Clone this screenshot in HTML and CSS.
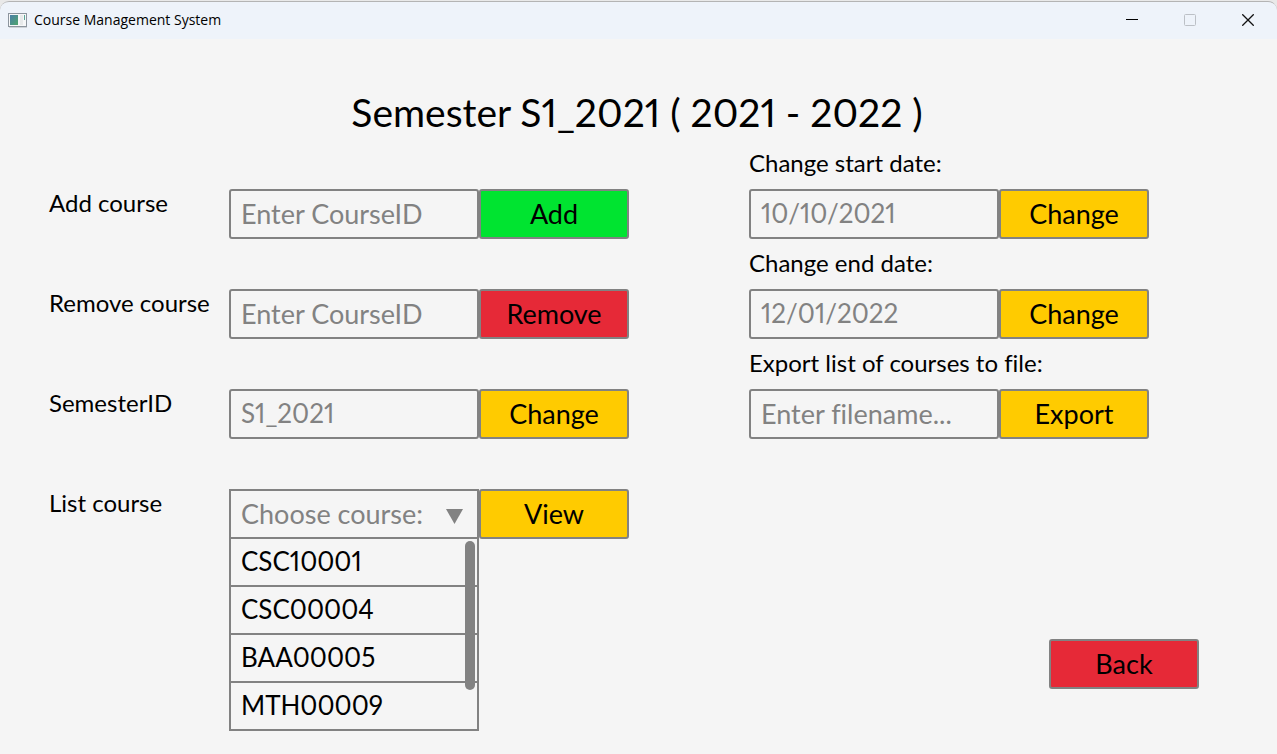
FILE: index.html
```html
<!DOCTYPE html>
<html lang="en">
<head>
<meta charset="utf-8">
<meta name="viewport" content="width=device-width, initial-scale=1">
<title>Course Management System</title>
<link rel="stylesheet" href="styles.css">
</head>
<body>
<div class="window">
  <header class="titlebar">
    <svg class="app-icon" width="20" height="17" viewBox="0 0 20 17" aria-hidden="true">
      <defs>
        <linearGradient id="pane" x1="0" y1="0" x2="1" y2="1">
          <stop offset="0" stop-color="#4a7fa8"/>
          <stop offset="1" stop-color="#4fa56c"/>
        </linearGradient>
      </defs>
      <rect x="1" y="15" width="18" height="1" fill="#cfd3d8"/>
      <rect x=".5" y="1.5" width="18" height="13" fill="#f6f7f8" stroke="#8d959e"/>
      <rect x="2" y="3" width="8" height="10" fill="url(#pane)"/>
      <rect x="12" y="3" width="3" height="10" fill="#e7e9ea"/>
      <rect x="16" y="3" width="1" height="5" fill="#58a596"/>
    </svg>
    <span class="app-name">Course Management System</span>
    <div class="window-controls">
      <button class="window-button" type="button" aria-label="Minimize">
        <svg width="12" height="12" viewBox="0 0 12 12"><path d="M0 5.5H12" stroke="#000"/></svg>
      </button>
      <button class="window-button" type="button" aria-label="Maximize" disabled>
        <svg width="12" height="12" viewBox="0 0 12 12"><rect x=".5" y=".5" width="11" height="11" rx="1" fill="none" stroke="#bcc0c6"/></svg>
      </button>
      <button class="window-button" type="button" aria-label="Close">
        <svg width="12" height="12" viewBox="0 0 12 12"><path d="M.3 .3L11.7 11.7M11.7 .3L.3 11.7" stroke="#111" stroke-width="1.3"/></svg>
      </button>
    </div>
  </header>

  <main class="content">
    <h1 class="heading">Semester S1_2021 ( 2021 - 2022 )</h1>
    <div class="columns">
      <form class="course-form">
        <div class="row">
          <label class="label" for="add-course">Add course</label>
          <div class="field">
            <input class="input" id="add-course" type="text" placeholder="Enter CourseID">
            <button class="button button-add" type="button">Add</button>
          </div>
        </div>
        <div class="row">
          <label class="label" for="remove-course">Remove course</label>
          <div class="field">
            <input class="input" id="remove-course" type="text" placeholder="Enter CourseID">
            <button class="button button-danger" type="button">Remove</button>
          </div>
        </div>
        <div class="row">
          <label class="label" for="semester-id">SemesterID</label>
          <div class="field">
            <input class="input input-code" id="semester-id" type="text" placeholder="S1_2021">
            <button class="button" type="button">Change</button>
          </div>
        </div>
        <div class="row">
          <label class="label" for="list-course">List course</label>
          <div class="field">
            <div class="dropdown">
              <select class="input select" id="list-course">
                <option>Choose course:</option>
              </select>
              <svg class="arrow" width="17" height="15" viewBox="0 0 17 15" aria-hidden="true"><path d="M0 0H17L8.5 15Z" fill="#828282"/></svg>
              <div class="menu">
                <button class="option" type="button">CSC10001</button>
                <button class="option" type="button">CSC00004</button>
                <button class="option" type="button">BAA00005</button>
                <button class="option" type="button">MTH00009</button>
                <span class="scroll-thumb"></span>
              </div>
            </div>
            <button class="button" type="button">View</button>
          </div>
        </div>
      </form>

      <form class="semester-form">
        <div class="stack">
          <label class="label" for="start-date">Change start date:</label>
          <div class="field">
            <input class="input input-code" id="start-date" type="text" placeholder="10/10/2021">
            <button class="button" type="button">Change</button>
          </div>
        </div>
        <div class="stack">
          <label class="label" for="end-date">Change end date:</label>
          <div class="field">
            <input class="input input-code" id="end-date" type="text" placeholder="12/01/2022">
            <button class="button" type="button">Change</button>
          </div>
        </div>
        <div class="stack">
          <label class="label" for="filename">Export list of courses to file:</label>
          <div class="field">
            <input class="input" id="filename" type="text" placeholder="Enter filename...">
            <button class="button" type="button">Export</button>
          </div>
        </div>
        <button class="button button-danger back" type="button">Back</button>
      </form>
    </div>
  </main>
</div>
</body>
</html>
```

FILE: styles.css
```css
* {
  box-sizing: border-box;
}

body {
  margin: 0;
  background: #e9e9e9;
  color: #000;
  font-family: Lato, "Open Sans", sans-serif;
  font-variant-ligatures: none;
  font-variant-numeric: proportional-nums;
}

button,
input,
select {
  margin: 0;
  font-family: inherit;
  font-variant-ligatures: inherit;
  font-variant-numeric: inherit;
  color: #000;
}

.window {
  min-height: 100vh;
  padding-top: 1px;
}

.titlebar {
  display: flex;
  align-items: center;
  height: 38px;
  padding-left: 8px;
  padding-bottom: 1px;
  border-top: 1px solid #b4b4b4;
  border-radius: 9px 9px 0 0;
  background: #eef3fa;
}

.app-name {
  flex: 1;
  padding-left: 6px;
  font-family: "Open Sans", sans-serif;
  font-size: 14px;
  line-height: 20px;
}

.window-controls {
  display: flex;
}

.window-button {
  display: grid;
  place-items: center;
  width: 58px;
  height: 36px;
  padding: 0;
  border: 0;
  background: transparent;
}

.content {
  min-height: calc(100vh - 39px);
  padding: 45px 78px 23px 49px;
  background: #f5f5f5;
}

.heading {
  margin: 0;
  padding-left: 26px;
  font-size: 39px;
  font-weight: 400;
  line-height: 56px;
  text-align: center;
}

.columns {
  display: grid;
  grid-template-columns: 58fr 45fr;
  gap: 120px;
}

.course-form {
  display: grid;
  align-content: start;
  gap: 50px;
  padding-top: 49px;
}

.row {
  display: grid;
  grid-template-columns: 180px 1fr;
}

.label {
  font-size: 24px;
  line-height: 28px;
}

.field {
  display: grid;
  grid-template-columns: 5fr 3fr;
  height: 50px;
}

.input {
  width: 100%;
  min-width: 0;
  height: 50px;
  padding: 0 10px 2px;
  border: 2px solid #828282;
  border-radius: 3px;
  background: #f5f5f5;
  font-size: 27px;
}

.input::placeholder {
  color: #828282;
  opacity: 1;
}

.input-code {
  font-size: 26px;
}

.button {
  min-width: 0;
  height: 50px;
  padding: 0 0 2px;
  border: 2px solid #828282;
  border-radius: 3px;
  background: #ffcb00;
  font-size: 27px;
}

.button-add {
  background: #00e430;
}

.button-danger {
  background: #e62937;
}

.dropdown {
  position: relative;
}

.select {
  appearance: none;
  border-radius: 0;
  color: #828282;
}

.arrow {
  position: absolute;
  top: 20px;
  right: 16px;
  pointer-events: none;
}

.menu {
  position: absolute;
  top: 48px;
  left: 0;
  right: 0;
  border: 2px solid #828282;
  border-bottom: 0;
  background: #f5f5f5;
}

.option {
  display: block;
  width: 100%;
  height: 48px;
  padding: 0 10px 2px;
  border: 0;
  border-bottom: 2px solid #828282;
  background: transparent;
  font-size: 26px;
  text-align: left;
}

.scroll-thumb {
  position: absolute;
  top: 2px;
  right: 2px;
  width: 10px;
  height: 149px;
  border-radius: 5px;
  background: #828282;
}

.semester-form {
  display: flex;
  flex-direction: column;
  gap: 10px;
  padding-top: 9px;
}

.stack {
  display: grid;
  gap: 12px;
  padding-right: 50px;
}

.back {
  align-self: flex-end;
  width: 150px;
  margin-top: 190px;
}
```
